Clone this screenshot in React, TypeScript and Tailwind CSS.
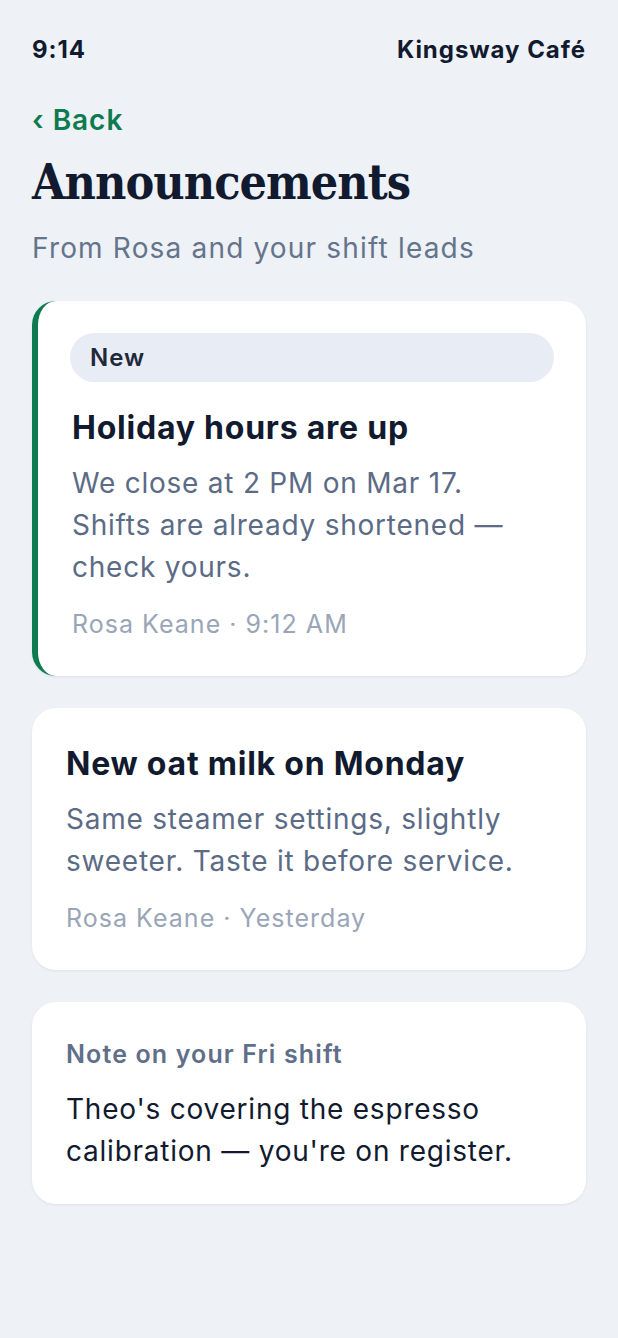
import type { ReactNode } from "react";

const sans = { fontFamily: "Inter, 'Noto Sans', sans-serif" };
const serif = { fontFamily: "'DejaVu Serif', 'Liberation Serif', serif" };

function Card({ children, accent, className = "" }: { children: ReactNode; accent?: boolean; className?: string }) {
  return (
    <div
      className={`rounded-3xl bg-white shadow-[0_1px_3px_rgba(15,23,42,0.07)] ${
        accent ? "border-l-[6px] border-[#0e7a4f]" : ""
      } ${className}`}
    >
      {children}
    </div>
  );
}

export default function App() {
  return (
    <div className="min-h-[1338px] bg-[#eef1f6] px-8 pt-[34px] pb-10 tracking-[0.048em] text-[#111a2e]" style={sans}>
      {/* status bar */}
      <div className="flex items-center justify-between text-[24px] font-bold leading-[32px] tracking-[0.04em]">
        <span>9:14</span>
        <span>Kingsway Café</span>
      </div>

      <button className="mt-9 flex items-center gap-2 text-[28px] font-semibold leading-[36px] tracking-[0.035em] text-[#0e7a4f]">
        <span>‹</span>
        <span>Back</span>
      </button>

      <h1
        className="mt-4 text-[48px] font-bold leading-[56px] tracking-[-0.02em] font-stretch-condensed"
        style={serif}
      >
        Announcements
      </h1>
      <p className="mt-5 text-[28px] leading-[36px] tracking-[0.042em] text-[#64748b]">From Rosa and your shift leads</p>

      <div className="mt-[35px] flex flex-col gap-8">
        <Card accent className="px-8 pt-8 pb-9">
          <div className="flex h-[49px] items-center rounded-full bg-[#e8ecf4] px-5 text-[24px] font-semibold tracking-[0.04em] text-[#1e293b]">
            New
          </div>
          <div className="mt-6 pl-[2px] text-[32px] font-bold leading-[44px]">Holiday hours are up</div>
          <p className="mt-3 pl-[2px] text-[28px] leading-[42px] text-[#5b6b86]">
            We close at 2 PM on Mar 17.
            <br />
            Shifts are already shortened — check yours.
          </p>
          <div className="mt-5 pl-[2px] text-[25px] leading-[32px] tracking-[0.041em] text-[#9aa5b8]">
            Rosa Keane · 9:12 AM
          </div>
        </Card>

        <Card className="pl-[34px] pr-8 pt-[34px] pb-9">
          <div className="text-[32px] font-bold leading-[44px]">New oat milk on Monday</div>
          <p className="mt-3 text-[28px] leading-[42px] text-[#5b6b86]">
            Same steamer settings, slightly sweeter. Taste it before service.
          </p>
          <div className="mt-5 text-[25px] leading-[32px] tracking-[0.041em] text-[#9aa5b8]">Rosa Keane · Yesterday</div>
        </Card>

        <Card className="pl-[34px] pr-8 pt-[37px] pb-8">
          <div className="text-[25px] font-semibold leading-[30px] tracking-[0.045em] text-[#5f6f89]">
            Note on your Fri shift
          </div>
          <p className="mt-[19px] text-[28px] leading-[42px] text-[#111a2e]">
            Theo's covering the espresso calibration — you're on register.
          </p>
        </Card>
      </div>
    </div>
  );
}
